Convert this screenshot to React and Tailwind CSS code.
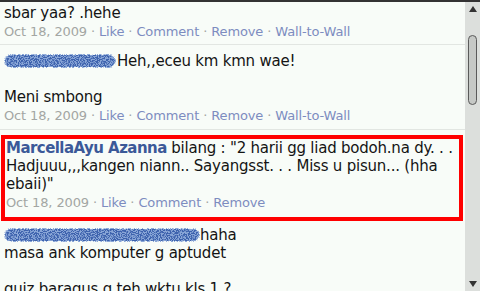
import React from "react";

const Blob = ({ w, id }) => (
  <svg width={w} height="16" className="inline-block align-[-3px]" viewBox={`0 0 ${w} 16`}>
    <defs>
      <filter id={id} x="0" y="0" width="100%" height="100%">
        <feTurbulence type="fractalNoise" baseFrequency="0.9" numOctaves="1" seed="3" result="t" />
        <feColorMatrix in="t" type="matrix" values="0 0 0 0 0.25  0 0 0 0 0.38  0 0 0 0 0.68  0 0 0 9 -4" result="c" />
        <feComposite in="c" in2="SourceGraphic" operator="in" />
      </filter>
    </defs>
    <rect x="1" y="2" width={w - 2} height="12" rx="6" fill="#3d62ad" />
    <rect x="0" y="1" width={w} height="14" rx="7" fill="#fff" filter={`url(#${id})`} />
  </svg>
);

const Meta = ({ wall = true }) => (
  <div className="text-[13px] leading-[20px] tracking-[-0.13px] text-[#a3a6a3] whitespace-nowrap">
    Oct 18, 2009 · <span className="text-[#7d8cc0]">Like</span> ·{" "}
    <span className="text-[#7d8cc0]">Comment</span> ·{" "}
    <span className="text-[#7d8cc0]">Remove</span>
    {wall && (
      <>
        {" "}· <span className="text-[#7d8cc0]">Wall-to-Wall</span>
      </>
    )}
  </div>
);

export default function App() {
  return (
    <div
      className="w-[480px] h-[291px] overflow-hidden flex bg-[#f8fcf8] text-[#141414] border-t-2 border-[#333]"
      style={{ fontFamily: '"DejaVu Sans", sans-serif' }}
    >
      <div className="flex-1 min-w-0 text-[15px] leading-[18px] tracking-[-0.22px]">
        <div className="px-[4px] pt-[2px] pb-[2px] border-b border-[#e2e6e2]">
          <div>sbar yaa? .hehe</div>
          <Meta />
        </div>
        <div className="px-[4px] pt-[7px] pb-[3px] border-b border-[#e2e6e2]">
          <div className="whitespace-nowrap">
            <Blob w={112} id="b1" />
            <span className="ml-[1px]">Heh,,eceu km kmn wae!</span>
          </div>
          <div className="h-[18px]" />
          <div>Meni smbong</div>
          <Meta />
        </div>
        <div className="ml-[1px] mr-[2px] mt-[5px] border-4 border-[#ff0000] pl-[1px] pr-[1px] pt-0 pb-[4px]">
          <div className="whitespace-nowrap">
            <span className="font-bold text-[#3b5998] tracking-[-0.55px]">MarcellaAyu Azanna</span> bilang : "2 harii gg liad bodoh.na dy. . .
          </div>
          <div className="whitespace-nowrap">Hadjuuu,,,kangen niann.. Sayangsst. . . Miss u pisun... (hha</div>
          <div>ebaii)"</div>
          <Meta wall={false} />
        </div>
        <div className="px-[4px] pt-[5px]">
          <div className="whitespace-nowrap">
            <Blob w={196} id="b2" />haha
          </div>
          <div>masa ank komputer g aptudet</div>
          <div className="h-[18px]" />
          <div className="whitespace-nowrap">quiz baragus g teh wktu kls 1 ?</div>
        </div>
      </div>
      <div className="w-[15px] bg-[#dcdfdc] flex flex-col items-center">
        <svg width="8" height="6" className="mt-[4px]" viewBox="0 0 8 6">
          <path d="M0 6 L4 0 L8 6 Z" fill="#333" />
        </svg>
        <div className="mt-[23px] w-[9px] h-[70px] rounded-full bg-[#c6c9c6] border border-[#5a5a5a]" />
        <div className="flex-1" />
        <svg width="8" height="6" className="mb-[4px]" viewBox="0 0 8 6">
          <path d="M0 0 L4 6 L8 0 Z" fill="#333" />
        </svg>
      </div>
    </div>
  );
}
